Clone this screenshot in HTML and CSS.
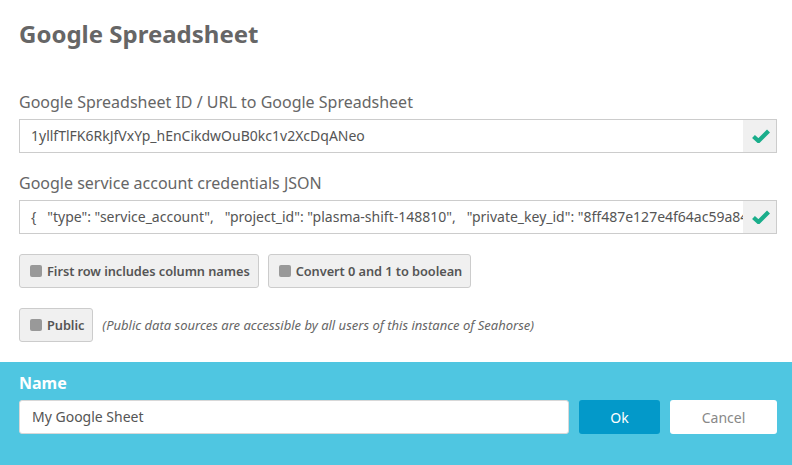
FILE: index.html
```html
<!DOCTYPE html>
<html>
<head>
<meta charset="utf-8">
<link rel="stylesheet" href="styles.css">
</head>
<body>
<div class="main">
  <h1 class="title">Google Spreadsheet</h1>
  <label class="label first">Google Spreadsheet ID / URL to Google Spreadsheet</label>
  <div class="field">
    <div class="value">1yllfTlFK6RkJfVxYp_hEnCikdwOuB0kc1v2XcDqANeo</div>
    <div class="ok"><svg width="18" height="14" viewBox="0 0 18 14"><path d="M1.5 7.5 L6.5 12 L16.5 2" fill="none" stroke="#1aae8b" stroke-width="4.2"/></svg></div>
  </div>
  <label class="label">Google service account credentials JSON</label>
  <div class="field">
    <div class="value">{&nbsp;&nbsp; "type": "service_account",&nbsp;&nbsp; "project_id": "plasma-shift-148810",&nbsp;&nbsp; "private_key_id": "8ff487e127e4f64ac59a84</div>
    <div class="ok"><svg width="18" height="14" viewBox="0 0 18 14"><path d="M1.5 7.5 L6.5 12 L16.5 2" fill="none" stroke="#1aae8b" stroke-width="4.2"/></svg></div>
  </div>
  <div class="row opts">
    <div class="toggle"><span class="box"></span>First row includes column names</div>
    <div class="toggle"><span class="box"></span>Convert 0 and 1 to boolean</div>
  </div>
  <div class="row pub">
    <div class="toggle"><span class="box"></span>Public</div>
    <span class="note">(Public data sources are accessible by all users of this instance of Seahorse)</span>
  </div>
</div>
<div class="footer">
  <div class="name-label">Name</div>
  <div class="name-row">
    <div class="name-input">My Google Sheet</div>
    <button class="btn btn-ok">Ok</button>
    <button class="btn btn-cancel">Cancel</button>
  </div>
</div>
</body>
</html>
```

FILE: styles.css
```css
* { box-sizing: border-box; }
html, body { margin: 0; padding: 0; }
body {
  font-family: "Noto Sans", "Open Sans", sans-serif;
  background: #fff;
  width: 792px;
  height: 465px;
  overflow: hidden;
}
.main {
  padding: 20px 15px 20px 19px;
}
.title {
  margin: 0;
  font-size: 24px;
  line-height: 28px;
  font-weight: 700;
  color: #666;
}
.label {
  display: block;
  font-size: 16px;
  line-height: 22px;
  color: #666;
  margin-top: 19px;
  margin-bottom: 6px;
}
.label.first { margin-top: 43px; }
.field {
  display: flex;
  height: 34px;
  border: 1px solid #ccc;
  background: #fff;
}
.value {
  flex: 1;
  min-width: 0;
  overflow: hidden;
  white-space: nowrap;
  padding-left: 11px;
  font-size: 14px;
  line-height: 32px;
  color: #555;
}
.ok {
  width: 33px;
  background: #f0f0f0;
  display: flex;
  align-items: center;
  justify-content: center;
  padding-left: 2px;
}
.ok svg { display: block; }
.row {
  display: flex;
  align-items: center;
  gap: 9px;
  margin-top: 20px;
}
.toggle {
  display: flex;
  align-items: center;
  height: 34px;
  padding: 0 8px 0 10px;
  border: 1px solid #ccc;
  border-radius: 3px;
  background: #f0f0f0;
  font-size: 12.8px;
  letter-spacing: -0.06px;
  font-weight: 600;
  color: #555;
}
.box {
  width: 12px;
  height: 12px;
  border-radius: 2px;
  background: #999;
  margin-right: 5px;
}
.pub { gap: 9px; }
.note {
  font-size: 13px;
  font-style: italic;
  color: #666;
}
.footer {
  background: #4fc6e1;
  padding: 10px 15px 40px 19px;
}
.name-label {
  font-size: 16px;
  line-height: 22px;
  font-weight: 700;
  color: #fff;
  margin-bottom: 6px;
}
.name-row {
  display: flex;
  gap: 10px;
}
.name-input {
  flex: 1;
  height: 34px;
  border: 1px solid #d8d8d8;
  border-radius: 3px;
  background: #fff;
  padding-left: 12px;
  font-size: 14px;
  line-height: 32px;
  color: #555;
}
.btn {
  height: 34px;
  border: none;
  border-radius: 3px;
  font-family: "Noto Sans", "Open Sans", sans-serif;
  font-size: 14px;
  padding: 0;
}
.btn-ok {
  width: 81px;
  background: #0399c9;
  color: #fff;
}
.btn-cancel {
  width: 107px;
  background: #fff;
  color: #888;
}
```
